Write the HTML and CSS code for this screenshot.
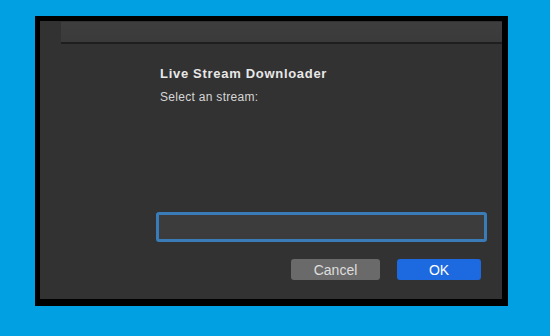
FILE: index.html
```html
<!DOCTYPE html>
<html>
<head>
	<meta charset="utf-8">
	<title>Live Stream Downloader</title>
	<link rel="stylesheet" href="styles.css">
</head>
<body>
	<div class="frame">
		<div class="window">
			<div class="titlebar"></div>
			<div class="content">
				<div class="heading">Live Stream Downloader</div>
				<div class="prompt">Select an stream:</div>
				<div class="field"><input type="text" class="stream-input"></div>
				<div class="button-row">
					<button class="btn cancel" type="button">Cancel</button>
					<button class="btn ok" type="button">OK</button>
				</div>
			</div>
		</div>
	</div>
</body>
</html>
```
FILE: styles.css
```css
* {
	box-sizing: border-box;
}

body {
	margin: 0;
	background: #01a0e3;
	font-family: 'Liberation Sans', 'Helvetica', sans-serif;
	height: 336px;
	overflow: hidden;
}

.frame {
	margin: 16px 0 0 35px;
	width: 473px;
	height: 290px;
	background: #000;
	padding: 5px 6px 7px 5px;
}

.window {
	height: 100%;
	background: #323232;
	display: grid;
	grid-template-columns: 21px 1fr;
	grid-template-rows: 23px 1fr;
}

.titlebar {
	grid-column: 2;
	grid-row: 1;
	margin-top: 1px;
	background: linear-gradient(#3e3e3e, #3a3a3a);
	border-bottom: 2px solid #1e1e1e;
}

.content {
	grid-column: 1 / 3;
	grid-row: 2;
	display: flex;
	flex-direction: column;
	padding: 22px 15px 19px 116px;
}

.heading {
	padding-left: 4px;
	font-size: 13px;
	font-weight: bold;
	letter-spacing: 0.7px;
	line-height: 16px;
	color: #e8e8e8;
}

.prompt {
	padding-left: 4px;
	margin-top: 8px;
	font-size: 12px;
	letter-spacing: 0.3px;
	line-height: 14px;
	color: #d6d6d6;
}

.field {
	margin-top: auto;
}

.stream-input {
	display: block;
	width: 100%;
	height: 30px;
	margin: 0;
	background: #3c3c3c;
	border: 3px solid #3a7cb8;
	border-radius: 3px;
	outline: none;
}

.button-row {
	display: flex;
	justify-content: flex-end;
	gap: 17px;
	margin-top: 17px;
	padding-right: 6px;
}

.btn {
	height: 21px;
	border: none;
	border-radius: 3px;
	font-family: inherit;
	font-size: 14px;
	padding: 0;
}

.cancel {
	width: 89px;
	background: #6a6a6a;
	color: #dedede;
}

.ok {
	width: 84px;
	background: #1c69e0;
	color: #fff;
}
```
